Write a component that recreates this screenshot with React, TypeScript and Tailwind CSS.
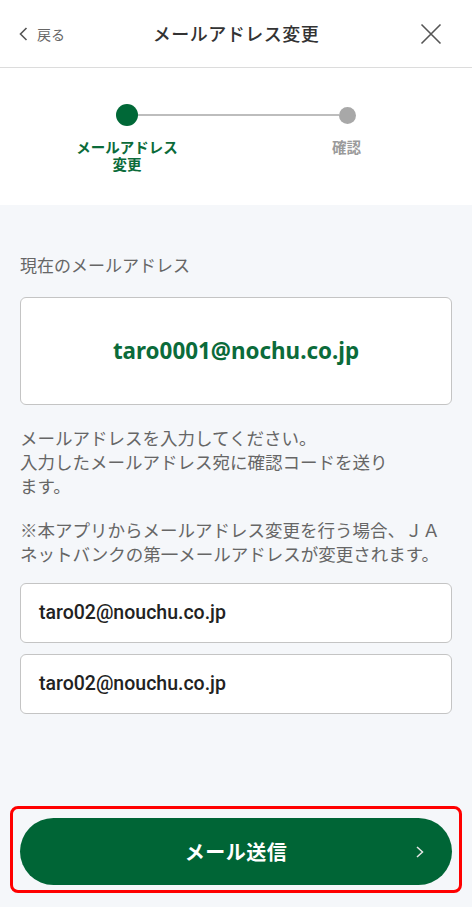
import React from 'react';

const jp = { fontFamily: '"Noto Sans CJK JP", "Noto Sans", sans-serif' };

const Header: React.FC = () => (
  <header className="relative flex h-[68px] items-center justify-center border-b border-[#dcdcdc] bg-white">
    <div className="absolute left-[19px] top-[26px] flex items-center gap-[9px] text-[#666]">
      <svg width="9" height="14" viewBox="0 0 9 14" fill="none">
        <path d="M7.5 1 L1.5 7 L7.5 13" stroke="#555" strokeWidth="1.6" />
      </svg>
      <span className="text-[14px] leading-[16px]">戻る</span>
    </div>
    <h1 className="text-[18px] font-medium tracking-[0.5px] text-[#333]">メールアドレス変更</h1>
    <svg className="absolute left-[420px] top-[23px]" width="22" height="22" viewBox="0 0 22 22" fill="none">
      <path d="M1.5 1.5 L20.5 20.5 M20.5 1.5 L1.5 20.5" stroke="#555" strokeWidth="1.6" />
    </svg>
  </header>
);

const Stepper: React.FC = () => (
  <section className="h-[137px] bg-white pt-[36px]">
    <div className="ml-[62px] w-[351px]">
      <div className="flex items-center pl-[54px] pr-[57px]">
        <div className="h-[22px] w-[22px] rounded-full bg-[#006837]" />
        <div className="h-[2px] flex-1 bg-[#bdbdbd]" />
        <div className="h-[17px] w-[17px] rounded-full bg-[#a8a8a8]" />
      </div>
      <div className="mt-[12px] flex justify-between text-[14.5px] font-bold leading-[17px]">
        <div className="flex w-[130px] flex-col items-center text-[#0b6b3a]">
          <span>メールアドレス</span>
          <span>変更</span>
        </div>
        <div className="w-[130px] pr-[3px] text-center text-[#9a9a9a]">確認</div>
      </div>
    </div>
  </section>
);

const inputs = ['taro02@nouchu.co.jp', 'taro02@nouchu.co.jp'];

export default function App() {
  return (
    <div className="min-h-[907px] w-[472px] bg-[#f5f7fa]" style={jp}>
      <Header />
      <Stepper />
      <main className="px-5 pt-[48px] pb-4">
        <p className="text-[17px] leading-[24px] text-[#666]">現在のメールアドレス</p>
        <div className="mt-[20px] flex h-[108px] items-center justify-center rounded-[6px] border border-[#c4c4c4] bg-white">
          <span
            className="text-[22.4px] font-bold text-[#0b6b3a]"
            style={{ fontFamily: '"Noto Sans", sans-serif' }}
          >
            taro0001@nochu.co.jp
          </span>
        </div>

        <p className="mt-[21px] whitespace-nowrap text-[17.5px] leading-[24px] text-[#666]">
          メールアドレスを入力してください。
          <br />
          入力したメールアドレス宛に確認コードを送り
          <br />
          ます。
        </p>
        <p className="mt-[20px] whitespace-nowrap text-[17.5px] leading-[24px] text-[#666]">
          ※本アプリからメールアドレス変更を行う場合、ＪＡ
          <br />
          ネットバンクの第一メールアドレスが変更されます。
        </p>

        <div className="mt-[17px] flex flex-col gap-[11px]">
          {inputs.map((v, i) => (
            <div
              key={i}
              className="flex h-[60px] items-center rounded-[6px] border border-[#c4c4c4] bg-white px-[18px]"
            >
              <span
                className="text-[19.5px] font-medium text-[#222]"
                style={{ fontFamily: 'Roboto, sans-serif' }}
              >
                {v}
              </span>
            </div>
          ))}
        </div>

        <div className="-mx-[10px] mt-[92px] rounded-[8px] border-[3px] border-[#ff0000] px-[7px] pt-[9px] pb-[5px]">
          <button className="relative flex h-[67px] w-full items-center justify-center rounded-full bg-[#006536] text-white">
            <span className="text-[20px] font-bold tracking-[0.5px]">メール送信</span>
            <svg className="absolute right-[28px] top-[28px]" width="8" height="12" viewBox="0 0 8 12" fill="none">
              <path d="M1 1 L6.5 6 L1 11" stroke="#e6e6e6" strokeWidth="1.5" />
            </svg>
          </button>
        </div>
      </main>
    </div>
  );
}
